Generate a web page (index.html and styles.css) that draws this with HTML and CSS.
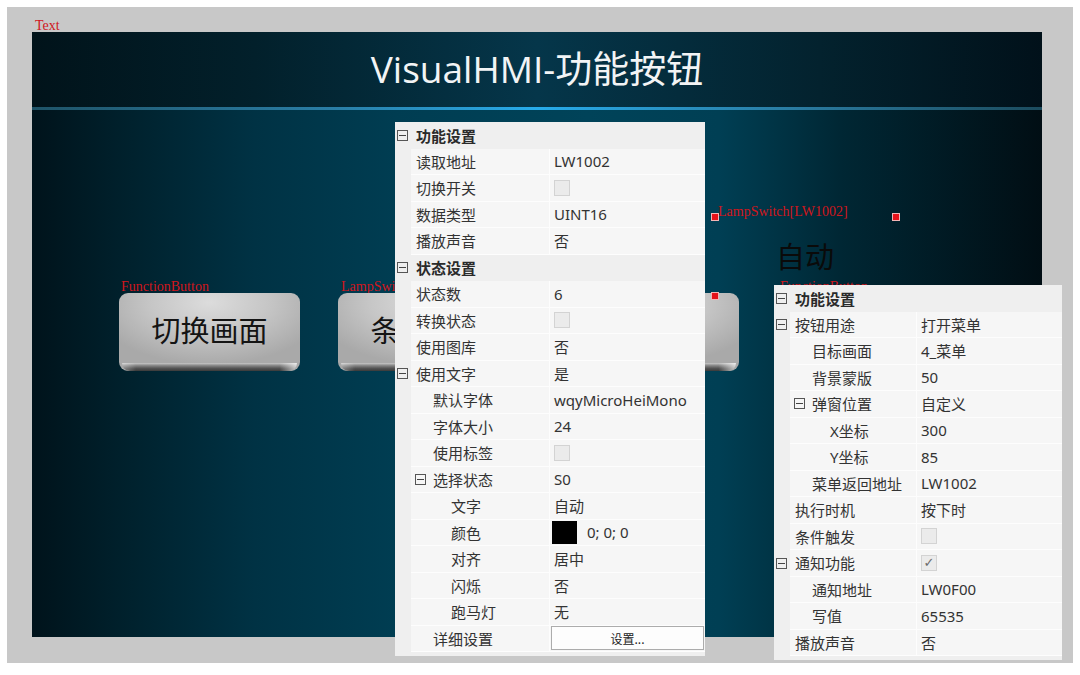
FILE: index.html
```html
<!DOCTYPE html>
<html lang="zh-CN">
<head>
<meta charset="utf-8">
<title>VisualHMI-功能按钮</title>
<link rel="stylesheet" href="styles.css">
</head>
<body>
<div class="screen">
  <div class="frame">
    <div class="canvas">
      <header class="hmi-head"><h1>VisualHMI-功能按钮</h1></header>
      <div class="hmi-line"></div>
      <div class="hmi-body"></div>

      <span class="tag tag-text">Text</span>

      <span class="tag tag-fb1">FunctionButton</span>
      <div class="fbtn fb1">切换画面</div>

      <span class="tag tag-ls1">LampSwitch</span>
      <div class="fbtn fb2">条件切换</div>

      <div class="fbtn fb3"></div>

      <span class="tag tag-ls2">LampSwitch[LW1002]</span>
      <div class="lamp">自动</div>
      <i class="handle h1"></i>
      <i class="handle h2"></i>
      <i class="handle h3"></i>

      <span class="tag tag-fb4">FunctionButton</span>
      <div class="fbtn fb4"></div>
    </div>
  </div>

  <div class="props props-main">
    <div class="row cat"><span class="gut"><i class="exp"></i></span><span class="cat-title">功能设置</span></div>
    <div class="row"><span class="gut"></span><span class="key">读取地址</span><span class="val">LW1002</span></div>
    <div class="row"><span class="gut"></span><span class="key">切换开关</span><span class="val"><i class="chk"></i></span></div>
    <div class="row"><span class="gut"></span><span class="key">数据类型</span><span class="val">UINT16</span></div>
    <div class="row"><span class="gut"></span><span class="key">播放声音</span><span class="val">否</span></div>
    <div class="row cat"><span class="gut"><i class="exp"></i></span><span class="cat-title">状态设置</span></div>
    <div class="row"><span class="gut"></span><span class="key">状态数</span><span class="val">6</span></div>
    <div class="row"><span class="gut"></span><span class="key">转换状态</span><span class="val"><i class="chk"></i></span></div>
    <div class="row"><span class="gut"></span><span class="key">使用图库</span><span class="val">否</span></div>
    <div class="row"><span class="gut"><i class="exp"></i></span><span class="key">使用文字</span><span class="val">是</span></div>
    <div class="row"><span class="gut"></span><span class="key l2">默认字体</span><span class="val">wqyMicroHeiMono</span></div>
    <div class="row"><span class="gut"></span><span class="key l2">字体大小</span><span class="val">24</span></div>
    <div class="row"><span class="gut"></span><span class="key l2">使用标签</span><span class="val"><i class="chk"></i></span></div>
    <div class="row"><span class="gut"></span><span class="key l2x"><i class="exp"></i>选择状态</span><span class="val">S0</span></div>
    <div class="row"><span class="gut"></span><span class="key l3">文字</span><span class="val">自动</span></div>
    <div class="row"><span class="gut"></span><span class="key l3">颜色</span><span class="val val-color"><i class="swatch"></i>0; 0; 0</span></div>
    <div class="row"><span class="gut"></span><span class="key l3">对齐</span><span class="val">居中</span></div>
    <div class="row"><span class="gut"></span><span class="key l3">闪烁</span><span class="val">否</span></div>
    <div class="row"><span class="gut"></span><span class="key l3">跑马灯</span><span class="val">无</span></div>
    <div class="row"><span class="gut"></span><span class="key l2">详细设置</span><span class="val val-btn"><span class="set-btn">设置...</span></span></div>
  </div>

  <div class="props props-side">
    <div class="row cat"><span class="gut"><i class="exp"></i></span><span class="cat-title">功能设置</span></div>
    <div class="row"><span class="gut"><i class="exp"></i></span><span class="key">按钮用途</span><span class="val">打开菜单</span></div>
    <div class="row"><span class="gut"></span><span class="key l2">目标画面</span><span class="val">4_菜单</span></div>
    <div class="row"><span class="gut"></span><span class="key l2">背景蒙版</span><span class="val">50</span></div>
    <div class="row"><span class="gut"></span><span class="key l2x"><i class="exp"></i>弹窗位置</span><span class="val">自定义</span></div>
    <div class="row"><span class="gut"></span><span class="key l3">X坐标</span><span class="val">300</span></div>
    <div class="row"><span class="gut"></span><span class="key l3">Y坐标</span><span class="val">85</span></div>
    <div class="row"><span class="gut"></span><span class="key l2">菜单返回地址</span><span class="val">LW1002</span></div>
    <div class="row"><span class="gut"></span><span class="key">执行时机</span><span class="val">按下时</span></div>
    <div class="row"><span class="gut"></span><span class="key">条件触发</span><span class="val"><i class="chk"></i></span></div>
    <div class="row"><span class="gut"><i class="exp"></i></span><span class="key">通知功能</span><span class="val"><i class="chk on">✓</i></span></div>
    <div class="row"><span class="gut"></span><span class="key l2">通知地址</span><span class="val">LW0F00</span></div>
    <div class="row"><span class="gut"></span><span class="key l2">写值</span><span class="val">65535</span></div>
    <div class="row"><span class="gut"></span><span class="key">播放声音</span><span class="val">否</span></div>
  </div>
</div>
</body>
</html>
```

FILE: styles.css
```css
* { box-sizing: border-box; }

html, body {
  margin: 0;
  padding: 0;
  background: #ffffff;
}

.screen {
  position: relative;
  width: 1080px;
  height: 675px;
  overflow: hidden;
}

/* ---------- designer frame ---------- */
.frame {
  margin: 7px 0 0 7px;
  width: 1066px;
  height: 656px;
  padding: 25px 31px 26px 25px;
  background: #c8c8c8;
}

.canvas {
  position: relative;
  height: 605px;
  display: flex;
  flex-direction: column;
}

.hmi-head {
  height: 75px;
  padding-bottom: 5px;
  display: flex;
  align-items: center;
  justify-content: center;
  background: linear-gradient(90deg, #01131a 0%, #02202b 22%, #05364a 50%, #03222e 78%, #01111a 100%);
}

.hmi-head h1 {
  margin: 0;
  font: 400 37px "Open Sans", "Noto Sans CJK SC", sans-serif;
  color: #f2f4f5;
}

.hmi-line {
  height: 3px;
  background: linear-gradient(90deg, #1f5468 0%, #2a7ea6 30%, #27abea 50%, #2a7ca2 75%, #1c4c5e 100%);
}

.hmi-body {
  flex: 1;
  background: linear-gradient(90deg, #00131b 0%, #00222e 10%, #003244 22%, #003d52 36%, #004359 55%, #003f54 68%, #002734 80%, #010e14 100%);
}

/* ---------- widget tags ---------- */
.tag {
  position: absolute;
  font: 14px/16px "Liberation Serif", serif;
  color: #d0161c;
  white-space: nowrap;
}
.tag-text { left: 3px; top: -14px; }
.tag-fb1 { left: 89px; top: 247px; }
.tag-ls1 { left: 309px; top: 247px; }
.tag-ls2 { left: 686px; top: 172px; }
.tag-fb4 { left: 748px; top: 247px; }

/* ---------- function buttons ---------- */
.fbtn {
  position: absolute;
  top: 261px;
  width: 181px;
  height: 78px;
  border-radius: 9px;
  padding-bottom: 7px;
  display: flex;
  align-items: center;
  justify-content: center;
  font: 29px "Noto Sans CJK SC", sans-serif;
  color: #141414;
  background: radial-gradient(ellipse 65% 80% at 50% 12%, #dcdcdc 0%, #c6c6c6 50%, #a9a9a9 100%);
}
.fbtn::after {
  content: "";
  position: absolute;
  left: 3px;
  right: 3px;
  bottom: 0;
  height: 8px;
  border-radius: 0 0 8px 8px;
  background:
    linear-gradient(90deg, rgba(255,255,255,0.35) 0%, rgba(255,255,255,0) 8%, rgba(255,255,255,0) 90%, rgba(255,255,255,0.7) 100%),
    linear-gradient(180deg, #c9c9c9 0%, #8a8a8a 30%, #555555 65%, #3a3a3a 100%);
}
.fb1 { left: 87px; }
.fb2 { left: 306px; }
.fb3 { left: 526px; }
.fb4 { left: 746px; }

/* ---------- lamp switch ---------- */
.lamp {
  position: absolute;
  left: 682px;
  top: 183px;
  width: 182px;
  height: 79px;
  display: flex;
  align-items: center;
  justify-content: center;
  font: 29px "Noto Sans CJK SC", sans-serif;
  color: #0a0a0a;
}

.handle {
  position: absolute;
  width: 8px;
  height: 8px;
  background: #e5121a;
  border: 1px solid #f3b5b5;
}
.h1 { left: 679px; top: 181px; }
.h2 { left: 860px; top: 181px; }
.h3 { left: 679px; top: 260px; }

/* ---------- property grids ---------- */
.props {
  position: absolute;
  background: #efefef;
  padding-bottom: 4px;
  font: 15px "Noto Sans", "Noto Sans CJK SC", sans-serif;
  color: #333333;
}
.props-main { left: 395px; top: 122px; width: 310px; }
.props-side { left: 774px; top: 285px; width: 288px; }

.row {
  display: grid;
  height: 26.5px;
}
.props-main .row { grid-template-columns: 16px 139px 1fr; }
.props-side .row { grid-template-columns: 16px 127px 1fr; }

.gut {
  display: flex;
  align-items: center;
  padding-left: 2px;
  background: #efefef;
}

.key, .val {
  display: flex;
  align-items: center;
  white-space: nowrap;
  overflow: hidden;
  background: #f6f6f6;
  border-bottom: 1px solid #fdfdfd;
}
.key {
  padding-left: 5px;
  border-right: 1px solid #fdfdfd;
}
.val { padding-left: 4px; }

.key.l2 { padding-left: 22px; }
.key.l3 { padding-left: 40px; }
.key.l2x { padding-left: 4px; }
.key.l2x .exp { margin-right: 7px; }

.cat .cat-title {
  grid-column: 2 / 4;
  display: flex;
  align-items: center;
  padding-left: 5px;
  background: #efefef;
  font-weight: 700;
  color: #2a2a2a;
}

.exp {
  width: 11px;
  height: 11px;
  flex: none;
  border: 1px solid #555555;
  display: flex;
  align-items: center;
  justify-content: center;
}
.exp::after {
  content: "";
  width: 7px;
  height: 1px;
  background: #444444;
}

.chk {
  width: 16px;
  height: 16px;
  border: 1px solid #d3d3d3;
  background: #ebebeb;
  display: flex;
  align-items: center;
  justify-content: center;
  font: normal 13px/1 "DejaVu Sans", sans-serif;
  color: #6a6a6a;
}

.val-color { padding-left: 2px; }
.swatch {
  width: 25px;
  height: 23px;
  background: #000000;
  margin-right: 10px;
}

.val-btn { padding-left: 1px; }
.set-btn {
  width: 153px;
  height: 24px;
  border: 1px solid #acacac;
  background: #fdfdfd;
  display: flex;
  align-items: center;
  justify-content: center;
  font: 12px "Noto Sans CJK SC", sans-serif;
  color: #222222;
}
```
